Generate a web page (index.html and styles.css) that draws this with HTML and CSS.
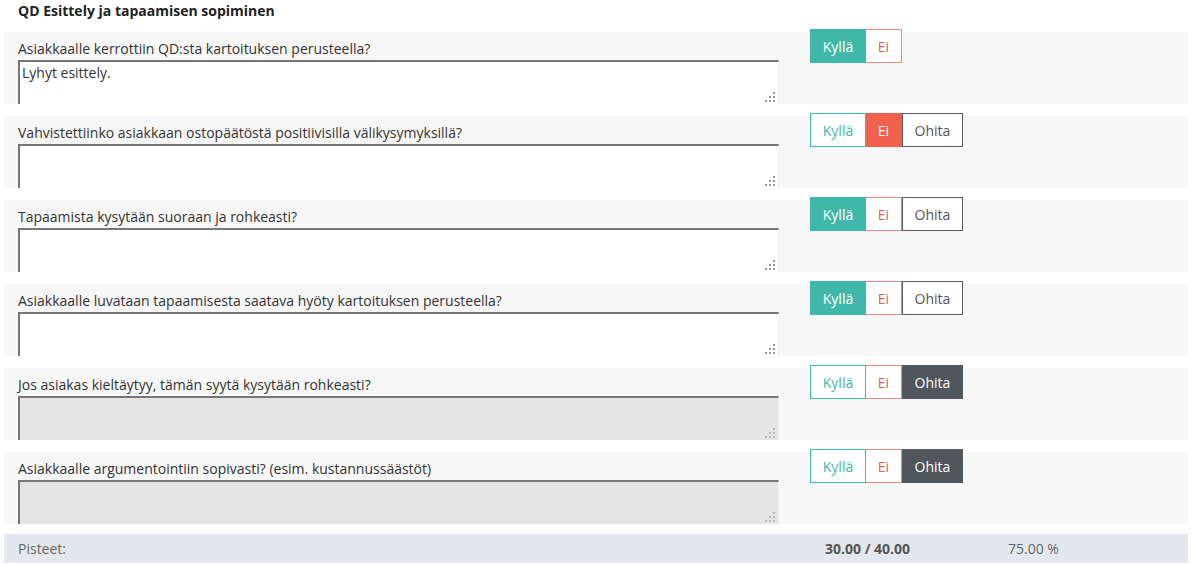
FILE: index.html
```html
<!DOCTYPE html>
<html lang="fi">
<head>
<meta charset="utf-8">
<meta name="viewport" content="width=device-width, initial-scale=1.0">
<title>QD Esittely ja tapaamisen sopiminen</title>
<link rel="stylesheet" href="styles.css">
</head>
<body>

<div class="container">
    <h3 class="title">QD Esittely ja tapaamisen sopiminen</h3>

    <div class="row">
        <div class="question">
            <label for="q1">Asiakkaalle kerrottiin QD:sta kartoituksen perusteella?</label>
            <div class="field">
                <textarea id="q1">Lyhyt esittely.</textarea>
                <svg class="grip" width="10" height="10" viewBox="0 0 10 10"><g fill="#999"><rect x="8" y="0" width="2" height="2"/><rect x="4" y="4" width="2" height="2"/><rect x="8" y="4" width="2" height="2"/><rect x="0" y="8" width="2" height="2"/><rect x="4" y="8" width="2" height="2"/><rect x="8" y="8" width="2" height="2"/></g></svg>
            </div>
        </div>
        <div class="choices">
            <button class="btn yes active">Kyllä</button><button class="btn no">Ei</button>
        </div>
    </div>

    <div class="row">
        <div class="question">
            <label for="q2">Vahvistettiinko asiakkaan ostopäätöstä positiivisilla välikysymyksillä?</label>
            <div class="field">
                <textarea id="q2"></textarea>
                <svg class="grip" width="10" height="10" viewBox="0 0 10 10"><g fill="#999"><rect x="8" y="0" width="2" height="2"/><rect x="4" y="4" width="2" height="2"/><rect x="8" y="4" width="2" height="2"/><rect x="0" y="8" width="2" height="2"/><rect x="4" y="8" width="2" height="2"/><rect x="8" y="8" width="2" height="2"/></g></svg>
            </div>
        </div>
        <div class="choices">
            <button class="btn yes">Kyllä</button><button class="btn no active">Ei</button><button class="btn skip">Ohita</button>
        </div>
    </div>

    <div class="row">
        <div class="question">
            <label for="q3">Tapaamista kysytään suoraan ja rohkeasti?</label>
            <div class="field">
                <textarea id="q3"></textarea>
                <svg class="grip" width="10" height="10" viewBox="0 0 10 10"><g fill="#999"><rect x="8" y="0" width="2" height="2"/><rect x="4" y="4" width="2" height="2"/><rect x="8" y="4" width="2" height="2"/><rect x="0" y="8" width="2" height="2"/><rect x="4" y="8" width="2" height="2"/><rect x="8" y="8" width="2" height="2"/></g></svg>
            </div>
        </div>
        <div class="choices">
            <button class="btn yes active">Kyllä</button><button class="btn no">Ei</button><button class="btn skip">Ohita</button>
        </div>
    </div>

    <div class="row">
        <div class="question">
            <label for="q4">Asiakkaalle luvataan tapaamisesta saatava hyöty kartoituksen perusteella?</label>
            <div class="field">
                <textarea id="q4"></textarea>
                <svg class="grip" width="10" height="10" viewBox="0 0 10 10"><g fill="#999"><rect x="8" y="0" width="2" height="2"/><rect x="4" y="4" width="2" height="2"/><rect x="8" y="4" width="2" height="2"/><rect x="0" y="8" width="2" height="2"/><rect x="4" y="8" width="2" height="2"/><rect x="8" y="8" width="2" height="2"/></g></svg>
            </div>
        </div>
        <div class="choices">
            <button class="btn yes active">Kyllä</button><button class="btn no">Ei</button><button class="btn skip">Ohita</button>
        </div>
    </div>

    <div class="row">
        <div class="question">
            <label for="q5">Jos asiakas kieltäytyy, tämän syytä kysytään rohkeasti?</label>
            <div class="field">
                <textarea id="q5" disabled></textarea>
                <svg class="grip" width="10" height="10" viewBox="0 0 10 10"><g fill="#bbb"><rect x="8" y="0" width="2" height="2"/><rect x="4" y="4" width="2" height="2"/><rect x="8" y="4" width="2" height="2"/><rect x="0" y="8" width="2" height="2"/><rect x="4" y="8" width="2" height="2"/><rect x="8" y="8" width="2" height="2"/></g></svg>
            </div>
        </div>
        <div class="choices">
            <button class="btn yes">Kyllä</button><button class="btn no">Ei</button><button class="btn skip active">Ohita</button>
        </div>
    </div>

    <div class="row">
        <div class="question">
            <label for="q6">Asiakkaalle argumentointiin sopivasti? (esim. kustannussäästöt)</label>
            <div class="field">
                <textarea id="q6" disabled></textarea>
                <svg class="grip" width="10" height="10" viewBox="0 0 10 10"><g fill="#bbb"><rect x="8" y="0" width="2" height="2"/><rect x="4" y="4" width="2" height="2"/><rect x="8" y="4" width="2" height="2"/><rect x="0" y="8" width="2" height="2"/><rect x="4" y="8" width="2" height="2"/><rect x="8" y="8" width="2" height="2"/></g></svg>
            </div>
        </div>
        <div class="choices">
            <button class="btn yes">Kyllä</button><button class="btn no">Ei</button><button class="btn skip active">Ohita</button>
        </div>
    </div>

    <div class="summary">
        <span>Pisteet:</span>
        <span class="score">30.00 / 40.00</span>
        <span>75.00 %</span>
    </div>
</div>

</body>
</html>
```

FILE: styles.css
```css
* {
    box-sizing: border-box;
}
body {
    margin: 0;
    background: white;
    font-family: "Open Sans", sans-serif;
    font-size: 14px;
    color: #333;
}
.container {
    padding: 0 8px 0 4px;
}
.title {
    margin: 0;
    padding: 1px 14px 0;
    height: 32px;
    font-size: 14px;
    font-weight: bold;
    color: #222;
}
.row {
    display: flex;
    height: 72px;
    margin-bottom: 12px;
    padding-left: 14px;
    background-color: #f7f7f7;
}
.question {
    width: 761px;
    padding-top: 8px;
}
label {
    display: block;
    height: 20px;
    line-height: 18px;
    color: #333;
}
.field {
    position: relative;
}
textarea {
    display: block;
    width: 100%;
    height: 44px;
    margin: 0;
    padding: 1px 2px;
    font-family: "Open Sans", sans-serif;
    font-size: 14px;
    color: #333;
    background-color: white;
    border-top: 2px solid #777;
    border-left: 2px solid #777;
    border-right: 1px solid #eee;
    border-bottom: none;
    border-radius: 0;
    resize: none;
}
textarea:disabled {
    background-color: #e4e4e4;
}
.grip {
    position: absolute;
    right: 4px;
    bottom: 2px;
}
.choices {
    margin-left: 31px;
    margin-top: -3px;
    display: flex;
    align-items: flex-start;
}
.btn {
    height: 34px;
    margin: 0;
    padding: 0 8px;
    font-family: "Open Sans", sans-serif;
    font-size: 14px;
    background-color: white;
    border: 1px solid;
    border-radius: 0;
}
.yes {
    width: 56px;
    color: #3fb8a9;
    border-color: #3fb8a9;
}
.yes.active {
    color: white;
    background-color: #3fb8a9;
}
.no {
    width: 36px;
    padding: 0;
    color: #e0604e;
    border-color: #e88a7a;
    border-left: none;
}
.no.active {
    color: white;
    background-color: #f0624d;
    border-color: #f0624d;
}
.skip {
    width: 61px;
    color: #555;
    border-color: #555b61;
    border-left: 1px solid #555b61;
}
.skip.active {
    color: white;
    background-color: #4f565c;
}
.summary {
    display: grid;
    grid-template-columns: 807px 183px 1fr;
    align-items: center;
    height: 29px;
    margin-top: -2px;
    padding-left: 14px;
    background-color: #e4e8ee;
    color: #666;
}
.score {
    font-weight: bold;
    color: #555;
}
```
